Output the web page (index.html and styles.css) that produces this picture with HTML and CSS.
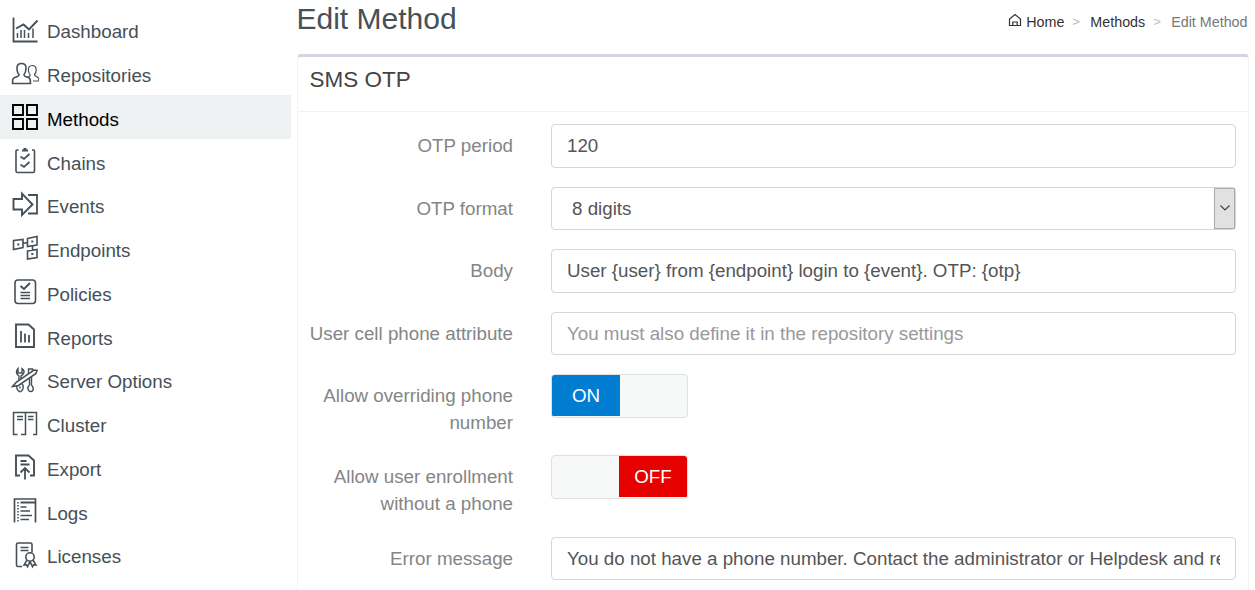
FILE: index.html
```html
<!DOCTYPE html>
<html lang="en">
<head>
  <meta charset="UTF-8" />
  <meta name="viewport" content="width=device-width, initial-scale=1.0"/>
  <title>Edit Method</title>
  <link rel="stylesheet" href="styles.css">
</head>
<body>
  <nav class="sidebar">
    <a class="nav-item" href="#">
      <svg class="icon" viewBox="0 0 28 28"><path d="M2.500 1.500v24h24" stroke-width="1.800"/><path d="M5 12.500l7.500-4 5.500 5 8.500-9" stroke-width="1.900"/><path d="M6.500 17v5M10 14v8M13.500 14v8M17.500 17v5M22 12.500v9.500" stroke-width="1.500"/></svg>
      <span>Dashboard</span>
    </a>
    <a class="nav-item" href="#">
      <svg class="icon" viewBox="0 0 28 28"><path d="M1.500 23.500c0-5 .5-5.500 3.500-6.500 2.500-.8 3-1 3-2.500-2-1.500-2-4-2-6.500 0-3 1.500-4.500 4.500-4.500s4.500 1.500 4.500 4.500c0 2.500-.5 5-2 6.500 0 1.500.5 1.700 3 2.500 3 1 3.500 1.500 3.500 6.500z"/><path d="M17.500 11c-.5-3.500 1-5.500 3.700-5.500s4 1.500 4 4.500c0 2.500-.7 3.500-1.700 4.500 0 1.500.5 1.500 2 2 2 .7 2.500 1.500 2.500 4.500h-6M17.500 11c.3 2 .8 3 1.500 3.500v1.500l-2 1" stroke-width="1.200"/></svg>
      <span>Repositories</span>
    </a>
    <a class="nav-item active" href="#">
      <svg class="icon" viewBox="0 0 28 28"><path d="M2 2h10v10h-10zM16 2h10v10h-10zM2 16h10v10h-10zM16 16h10v10h-10z" stroke-width="1.900"/></svg>
      <span>Methods</span>
    </a>
    <a class="nav-item" href="#">
      <svg class="icon" viewBox="0 0 28 28"><path d="M7.500 3h-1.500q-1 0-1 1v20q0 1.500 1.500 1.500h15.500q1.500 0 1.500-1.500v-20q0-1-1-1h-1.500"/><path d="M11 3.500h6M12.500 2h3" stroke-width="2"/><path d="M9.500 9.500l3.500 2.500 5.500-5M9.500 17.500l3.500 2.500 5.500-5" stroke-width="1.700"/></svg>
      <span>Chains</span>
    </a>
    <a class="nav-item" href="#">
      <svg class="icon" viewBox="0 0 28 28"><path d="M2.500 8h8.500v-5.500l10.500 11-10.500 10.500v-5.500h-8.500z" stroke-width="1.900"/><path d="M17 4h9v18.500h-9" stroke-width="1.800"/></svg>
      <span>Events</span>
    </a>
    <a class="nav-item" href="#">
      <svg class="icon" viewBox="0 0 28 28"><path d="M2.500 5.500l9.500-1v8l-9.500 2zM16.500 3.500l9.500-2v8.500l-9.500 1.500zM16.500 16l9.500-1.500v8l-9.500 1.500zM12 8.500l4.500-1M21.500 11v4"/><path d="M6.300 9.500h2M20.300 6.500h2M20.300 19h2" stroke-width="2"/></svg>
      <span>Endpoints</span>
    </a>
    <a class="nav-item" href="#">
      <svg class="icon" viewBox="0 0 28 28"><rect x="4" y="2" width="20.500" height="23.500" rx="3"/><path d="M9.500 8l3.500 3 6-6" stroke-width="2"/><path d="M9.500 14.500h9.500M9.500 17.500h9.500M9.500 20.500h9.500"/></svg>
      <span>Policies</span>
    </a>
    <a class="nav-item" href="#">
      <svg class="icon" viewBox="0 0 28 28"><path d="M5 2.500h12.500l5.500 5v17.500h-18z" stroke-width="1.900"/><path d="M10 9v11.500M14 11.500v9M18 13v7.500" stroke-width="1.800"/></svg>
      <span>Reports</span>
    </a>
    <a class="nav-item" href="#">
      <svg class="icon" viewBox="0 0 28 28"><path d="M8 17v-7c-3-2-3.500-5-1-7.500v4.500h4v-4.500c3.500 2 2 6-1 7.500v7c3 2 3 6.500 0 8.500h-2c-3-2-3-6.500 0-8.500M9 20.500v2M17.500 8v-5h4v4M18.500 13v6c-2.500 2-2 6.500 1.200 6.500s3.300-4 .8-6.500v-8" stroke-width="1.400"/><path class="pencil" d="M1.500 20.500l4-4.500 17.500-12 3 .5-1 3-17.500 12z"/></svg>
      <span>Server Options</span>
    </a>
    <a class="nav-item" href="#">
      <svg class="icon" viewBox="0 0 28 28"><path d="M6.500 24.500h-4v-22h23v22h-3.500M10 24.500h4.500v-22" stroke-width="1.500"/><path d="M6 6.500h6M6 9.500h6M17 6.500h5.500M17 9.500h5.500"/></svg>
      <span>Cluster</span>
    </a>
    <a class="nav-item" href="#">
      <svg class="icon" viewBox="0 0 28 28"><path d="M9 22.500h-4v-20h12.500l5.500 5v15h-4" stroke-width="1.900"/><path d="M9.500 8h6M9.500 11.500h9M14 26.500v-11M9.500 19.500l4.500-4.500 4.500 4.500" stroke-width="1.800"/></svg>
      <span>Export</span>
    </a>
    <a class="nav-item" href="#">
      <svg class="icon" viewBox="0 0 28 28"><path d="M3.500 25.500v-23.500h21v23.500" stroke-width="1.700"/><path d="M9.500 5.500h15" stroke-width="2"/><path d="M9.500 10h6M9.500 14h9.500M9.500 18.500h11.500M9.500 22.500h8.500" stroke-width="1.700"/><path d="M7 5v20" stroke-dasharray="1.500 1.500" stroke-width="1.500"/></svg>
      <span>Logs</span>
    </a>
    <a class="nav-item" href="#">
      <svg class="icon" viewBox="0 0 28 28"><path d="M11 25.500h-4q-1.500 0-1.500-1.500v-20.500q0-1.500 1.500-1.500h12.500q1.500 0 1.500 1.500v8"/><path d="M9.500 6.500h8M9.500 9.500h8" stroke-width="1.700"/><circle cx="19" cy="16" r="4.200"/><path d="M16 19l-3 5 2.500-.300 1 2 2.500-5 2.500 5 1-2 2.500.300-3-5" stroke-width="1.500"/></svg>
      <span>Licenses</span>
    </a>
  </nav>

  <main class="content">
    <header class="page-header">
      <h1>Edit Method</h1>
      <div class="breadcrumb">
        <svg class="home" viewBox="0 0 14 14"><path d="M1.500 12.500v-6.500l5.500-4.500 5.500 4.500v6.500zM4.800 12.500v-3.500h4.400v3.500"/></svg>
        <a href="#">Home</a>
        <span class="sep">&gt;</span>
        <a href="#">Methods</a>
        <span class="sep">&gt;</span>
        <span class="current">Edit Method</span>
      </div>
    </header>

    <section class="box">
      <h2>SMS OTP</h2>
      <form class="form">
        <div class="form-group">
          <label>OTP period</label>
          <input class="control" type="text" value="120">
        </div>
        <div class="form-group">
          <label>OTP format</label>
          <div class="control select">
            <span>8 digits</span>
            <div class="arrow"><svg viewBox="0 0 10 6"><path d="M.5.5l4.500 4.500 4.500-4.500"/></svg></div>
          </div>
        </div>
        <div class="form-group">
          <label>Body</label>
          <input class="control" type="text" value="User {user} from {endpoint} login to {event}. OTP: {otp}">
        </div>
        <div class="form-group">
          <label>User cell phone attribute</label>
          <input class="control" type="text" placeholder="You must also define it in the repository settings">
        </div>
        <div class="form-group">
          <label>Allow overriding phone number</label>
          <div class="switch"><span class="on">ON</span></div>
        </div>
        <div class="form-group">
          <label>Allow user enrollment without a phone</label>
          <div class="switch switch-off"><span class="off">OFF</span></div>
        </div>
        <div class="form-group">
          <label>Error message</label>
          <input class="control" type="text" value="You do not have a phone number. Contact the administrator or Helpdesk and register your phone.">
        </div>
      </form>
    </section>
  </main>
</body>
</html>
```
FILE: styles.css
```css
* {
  margin: 0;
  padding: 0;
  box-sizing: border-box;
  font-family: "Liberation Sans", Arial, sans-serif;
}

body {
  display: flex;
  height: 590px;
  overflow: hidden;
  background: #fff;
  font-size: 18.75px;
  color: #455057;
}

a {
  color: inherit;
  text-decoration: none;
}

svg {
  fill: none;
  stroke: currentColor;
  stroke-width: 1.6;
}

/* Sidebar */
.sidebar {
  width: 291px;
  flex-shrink: 0;
  padding-top: 7.5px;
}

.nav-item {
  display: flex;
  align-items: center;
  height: 43.75px;
  padding: 0 11px;
  gap: 8px;
}

.nav-item span {
  padding-top: 6px;
}

.nav-item.active {
  background: #edf1f2;
  color: #000;
}

.icon {
  width: 28px;
  height: 28px;
  flex-shrink: 0;
  margin-top: 1px;
}

.pencil {
  fill: #fff;
}

/* Main area */
.content {
  width: 952px;
  flex-shrink: 0;
  margin-left: 5.5px;
}

.page-header {
  display: flex;
  justify-content: space-between;
  height: 54px;
}

.page-header h1 {
  font-size: 30px;
  font-weight: normal;
  line-height: 37px;
}

.breadcrumb {
  display: flex;
  align-items: center;
  height: 43px;
  padding-right: 1px;
  font-size: 14.3px;
  color: #333;
}

.home {
  width: 14px;
  height: 14px;
  margin-right: 4px;
  margin-top: -3px;
  stroke-width: 1.2;
}

.sep {
  width: 26px;
  padding-left: 8px;
  color: #bbb;
  font-size: 13px;
}

.current {
  color: #777;
}

.box {
  height: 560px;
  border: 1px solid #f3f4f6;
  border-top: 3px solid #d2d6de;
  border-radius: 4px;
}

.box h2 {
  height: 55px;
  padding-left: 12px;
  border-bottom: 1px solid #f1f2f4;
  font-size: 22.5px;
  font-weight: normal;
  line-height: 46px;
  color: #444;
}

.form {
  padding: 12px 11.5px 0 0;
}

.form-group {
  display: flex;
  align-items: flex-start;
  margin-bottom: 18.75px;
}

.form-group label {
  width: 215.5px;
  padding-top: 9px;
  margin-right: 38px;
  flex-shrink: 0;
  line-height: 26.8px;
  text-align: right;
  color: #858585;
}

.control {
  flex: 1;
  min-width: 0;
  height: 43.75px;
  padding: 1px 15px 0;
  border: 1px solid #d2d6de;
  border-radius: 4px;
  background: #fff;
  font-size: 18.75px;
  color: #555;
}

.control::placeholder {
  color: #999;
}

.select {
  display: flex;
  align-items: center;
  justify-content: space-between;
  padding: 0 0 0 20px;
}

.select span {
  padding-top: 1px;
}

.arrow {
  display: flex;
  align-items: center;
  justify-content: center;
  width: 21px;
  height: 100%;
  border: 1px solid #aaa;
  background: #e1e1e1;
}

.arrow svg {
  width: 10px;
  height: 6px;
  stroke: #444;
  stroke-width: 1.2;
}

/* ON / OFF switches */
.switch {
  display: flex;
  width: 137px;
  height: 43.5px;
  border: 1px solid #dce1e3;
  border-radius: 4px;
  background: #f7f9f9;
  overflow: hidden;
}

.switch-off {
  justify-content: flex-end;
}

.switch span {
  width: 68px;
  height: 41px;
  line-height: 41px;
  text-align: center;
  color: #fff;
}

.on {
  background: #007dd1;
}

.off {
  background: #e60000;
}
```
